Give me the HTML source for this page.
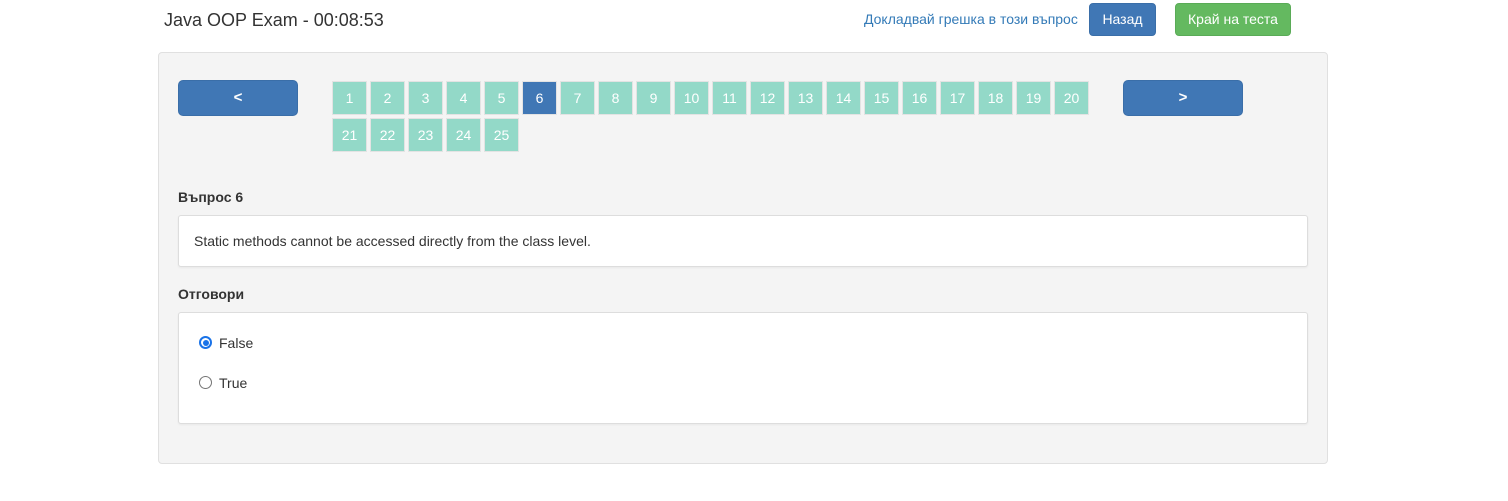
<!DOCTYPE html>
<html><head><meta charset="utf-8"><style>
*{box-sizing:border-box;margin:0;padding:0}
body{width:1508px;height:501px;background:#fff;font-family:"Liberation Sans",Arial,sans-serif;color:#333;position:relative;overflow:hidden;font-size:14px}
.abs{position:absolute}
.title{left:164px;top:10px;font-size:18px;color:#333}
.link{left:864px;top:11px;font-size:14px;color:#337ab7}
.btn{position:absolute;border-radius:4px;color:#fff;font-size:14px;text-align:center}
.panel{left:158px;top:52px;width:1170px;height:412px;background:#f4f4f4;border:1px solid #e0e0e0;border-radius:4px}
.nav{background:#4077b5;border:1px solid #3a6ea8;width:120px;height:36px;line-height:33px;font-weight:bold;font-size:15px;border-radius:5px}
.num{position:absolute;width:35px;height:34px;background:#93d9c8;border:1px solid #e3e3e3;color:#fff;font-size:14px;text-align:center;line-height:32px}
.num.act{background:#4077b5}
.lbl{font-weight:bold;font-size:14px;color:#333}
.box{background:#fff;border:1px solid #ddd;border-radius:3px;box-shadow:0 1px 2px rgba(0,0,0,.05)}
.radio{position:absolute;width:13px;height:13px;border-radius:50%;border:1px solid #767676;background:#fff}
.radio.on{border:2px solid #1a73e8}
.radio.on::after{content:"";position:absolute;left:1.5px;top:1.5px;width:6px;height:6px;border-radius:50%;background:#1a73e8}
</style></head><body>
<div class="abs title">Java OOP Exam - 00:08:53</div>
<div class="abs link">Докладвай грешка в този въпрос</div>
<div class="btn" style="left:1089px;top:3px;width:67px;height:33px;line-height:31px;background:#4077b5;border:1px solid #3a6ea8">Назад</div>
<div class="btn" style="left:1175px;top:3px;width:116px;height:33px;line-height:31px;background:#64b960;border:1px solid #5aab57">Край на теста</div>
<div class="abs panel"></div>
<div class="btn nav" style="left:178px;top:80px">&lt;</div>
<div class="btn nav" style="left:1123px;top:80px">&gt;</div>
<div id="nums"></div>
<div class="abs lbl" style="left:178px;top:189px">Въпрос 6</div>
<div class="abs box" style="left:178px;top:215px;width:1130px;height:52px"></div>
<div class="abs" style="left:194px;top:233px;font-size:14px;color:#333">Static methods cannot be accessed directly from the class level.</div>
<div class="abs lbl" style="left:178px;top:286px">Отговори</div>
<div class="abs box" style="left:178px;top:312px;width:1130px;height:112px"></div>
<div class="radio on" style="left:199px;top:336px"></div>
<div class="abs" style="left:219px;top:335px">False</div>
<div class="radio" style="left:199px;top:376px"></div>
<div class="abs" style="left:219px;top:375px">True</div>
<script>
var h='';for(var i=1;i<=25;i++){var r=i<=20?0:1,c=r?i-21:i-1;h+='<div class="num'+(i==6?' act':'')+'" style="left:'+(332+c*38)+'px;top:'+(81+r*37)+'px">'+i+'</div>';}
document.getElementById('nums').innerHTML=h;
</script>
</body></html>
